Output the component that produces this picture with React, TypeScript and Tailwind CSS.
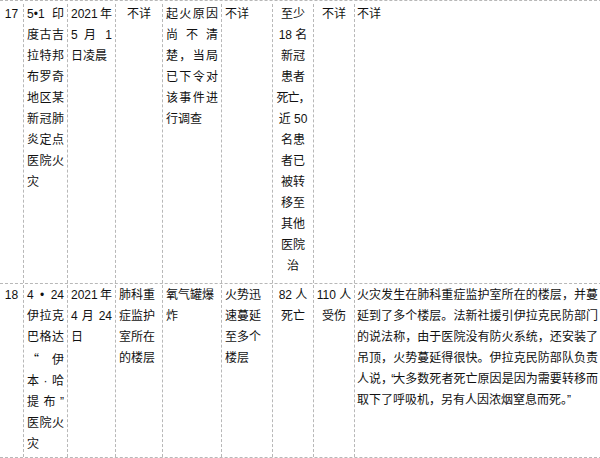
import type { ReactNode } from 'react'

function Cell({ w, children, className = '' }: { w: string; children?: ReactNode; className?: string }) {
  return (
    <div className={`${w} shrink-0 border-r border-dashed border-[#b8b8b8] ${className}`}>
      {children}
    </div>
  )
}

const cjkQuote = { fontFamily: '"Noto Sans CJK SC", sans-serif' }

export default function App() {
  return (
    <div className="w-[600px] h-[458px] overflow-hidden bg-white">
      <div
        className="w-[602px] border-t border-dashed border-[#b8b8b8] text-[12px] leading-[21px] text-[#111]"
        style={{ fontFamily: '"Liberation Sans", "Noto Sans CJK SC", sans-serif' }}
      >
        {/* row 17 */}
        <div className="flex h-[283px] border-b border-dashed border-[#b8b8b8] pt-[3px]">
          <Cell w="w-[24px]" className="text-center">17</Cell>
          <Cell w="w-[44px]" className="px-[3px] text-justify">5•1印度古吉拉特邦布罗奇地区某新冠肺炎定点医院火灾</Cell>
          <Cell w="w-[48px]" className="px-[3px] text-justify">2021年5 月 1 日凌晨</Cell>
          <Cell w="w-[47px]" className="px-[3px] text-center">不详</Cell>
          <Cell w="w-[59px]" className="px-[3px] text-justify">起火原因尚不清楚，当局已下令对该事件进行调查</Cell>
          <Cell w="w-[51px]" className="px-[3px]">不详</Cell>
          <Cell w="w-[41px]" className="px-[3px] text-center">
            至少 18 名新冠患者<span className="whitespace-nowrap tracking-[-1px]">死亡，</span>近 50 名患者已被转移至其他医院治
          </Cell>
          <Cell w="w-[41px]" className="px-[2px] text-center">不详</Cell>
          <Cell w="w-[247px]" className="pl-[2px] pr-[3px]">不详</Cell>
        </div>

        {/* row 18 */}
        <div className="flex h-[174px] border-b border-dashed border-[#b8b8b8] pt-px">
          <Cell w="w-[24px]" className="text-center">18</Cell>
          <Cell w="w-[44px]" className="px-[3px] text-justify">
            4 • 24伊拉克巴格达{'\u200b'}
            <span className="pr-[2px]" style={cjkQuote}>“</span>伊本·哈提布”{'\u200b'}医院火灾
          </Cell>
          <Cell w="w-[48px]" className="px-[3px] text-justify">2021年4 月 24 日</Cell>
          <Cell w="w-[47px]" className="px-[3px]">肺科重症监护室所在的楼层</Cell>
          <Cell w="w-[59px]" className="px-[3px]">氧气罐爆炸</Cell>
          <Cell w="w-[51px]" className="px-[3px]">火势迅速蔓延至多个楼层</Cell>
          <Cell w="w-[41px]" className="px-[3px] text-center">82 人死亡</Cell>
          <Cell w="w-[41px]" className="px-[2px] text-center">110 人受伤</Cell>
          <Cell w="w-[247px]" className="pl-[2px] pr-[3px] text-justify">
            火灾发生在肺科重症监护室所在的楼层，并蔓延到了多个楼层。法新社援引伊拉克民防部门的说法称，由于医院没有防火系统，还安装了吊顶，火势蔓延得很快。伊拉克民防部队负责人说<span className="tracking-[-2px]">，“</span>大多数死者死亡原因是因为需要转移而取下了呼吸机，另有人因浓烟窒息而死。”
          </Cell>
        </div>
      </div>
    </div>
  )
}
